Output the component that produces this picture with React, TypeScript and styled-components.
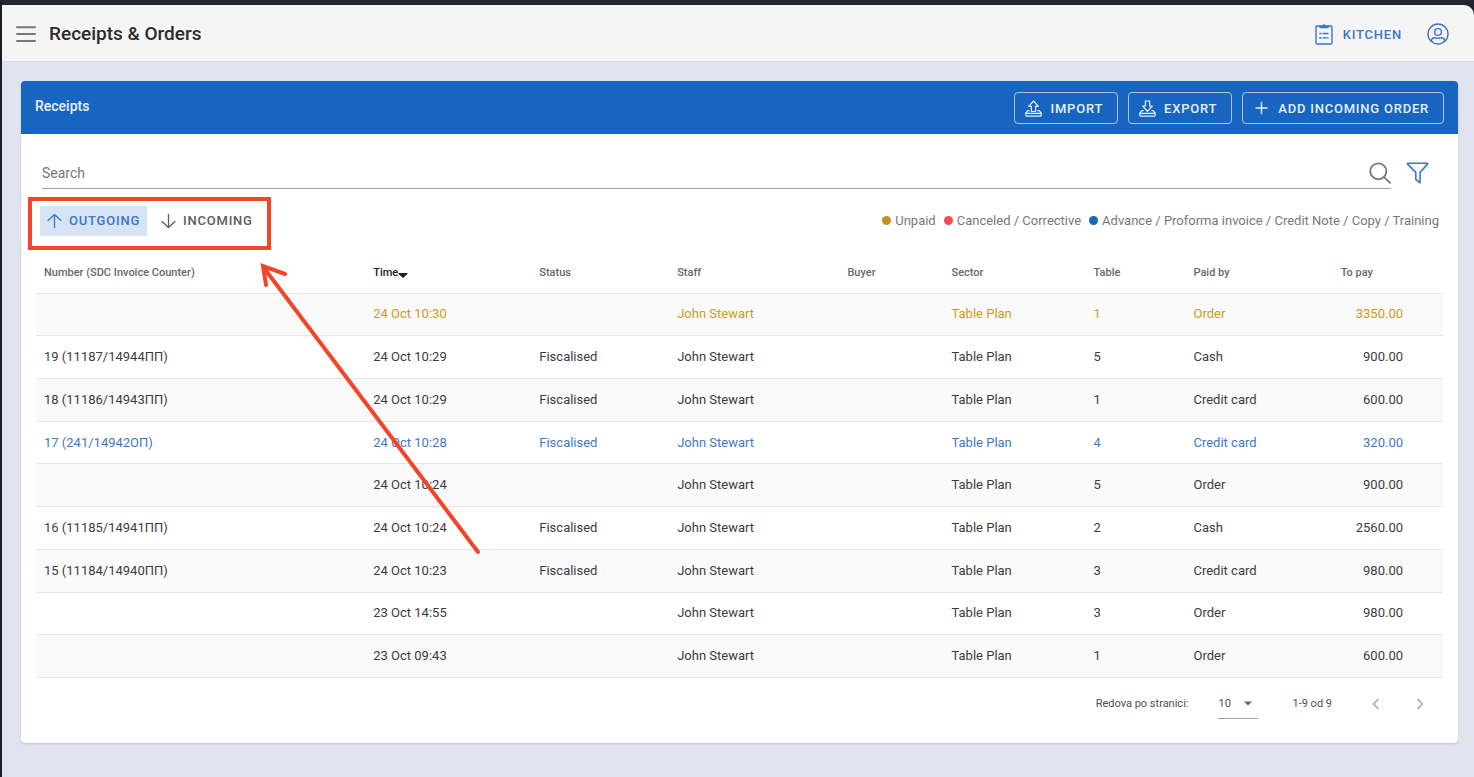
import React from "react";
import styled, { createGlobalStyle } from "styled-components";

const GlobalStyle = createGlobalStyle`
  * { box-sizing: border-box; }
  body {
    margin: 0;
    background: #e1e4ee;
    font-family: Roboto, "Liberation Sans", sans-serif;
    color: #333;
  }
  button, input, select { font-family: inherit; }
`;

const Window = styled.div`
  min-height: 100vh;
  display: flex;
  flex-direction: column;
  border-top: 5px solid #22262f;
  border-left: 2px solid #1b1c28;
  background: #22262f;
`;

const TopBar = styled.header`
  display: flex;
  align-items: center;
  height: 57px;
  padding: 2px 25px 0 14px;
  background: #f5f5f5;
  border-bottom: 1px solid #d8dae2;
  border-top-right-radius: 10px;
`;

const IconButton = styled.button`
  display: flex;
  padding: 0;
  border: 0;
  background: none;
  color: ${(p) => p.color || "#777"};
  cursor: pointer;
  &:disabled { cursor: default; }
`;

const PageTitle = styled.h1`
  margin: 0 auto 0 13px;
  font-size: 19px;
  font-weight: 500;
  line-height: 24px;
  color: #2b2b2b;
`;

const KitchenLink = styled.a`
  display: flex;
  align-items: center;
  gap: 10px;
  margin-right: 25px;
  font-size: 13px;
  font-weight: 500;
  letter-spacing: 0.06em;
  color: #3b76ca;
  text-decoration: none;
`;

const Content = styled.main`
  flex: 1;
  padding: 19px 16px 33px 19px;
  background: #e1e4ee;
`;

const Card = styled.section`
  background: #fff;
  border-radius: 4px;
  overflow: hidden;
  box-shadow: 0 1px 2px rgba(60, 70, 110, 0.2);
`;

const CardHead = styled.div`
  display: flex;
  align-items: flex-start;
  gap: 10px;
  height: 53px;
  padding: 11px 14px 0 14px;
  background: #1765c1;
  color: #fff;
`;

const CardTitle = styled.h2`
  margin: 0 auto 0 0;
  font-size: 14px;
  font-weight: 500;
  line-height: 28px;
  color: #eaf1fb;
`;

const OutlineButton = styled.button`
  display: flex;
  align-items: center;
  gap: 8px;
  height: 32px;
  padding: 0 14px 0 10px;
  border: 1px solid #a9c5ea;
  border-radius: 4px;
  background: none;
  color: #e6effa;
  font-size: 13px;
  font-weight: 500;
  letter-spacing: 0.06em;
  white-space: nowrap;
  cursor: pointer;
`;

const CardBody = styled.div`
  padding: 23px 15px 18px;
`;

const SearchRow = styled.div`
  display: flex;
  align-items: center;
  gap: 15px;
  padding: 0 14px 0 6px;
`;

const SearchField = styled.label`
  flex: 1;
  display: flex;
  align-items: center;
  height: 32px;
  border-bottom: 1px solid #a0a0a0;
  color: #777;
`;

const SearchInput = styled.input`
  flex: 1;
  min-width: 0;
  padding: 0;
  border: 0;
  outline: 0;
  background: none;
  font-size: 14px;
  color: #333;
  &::placeholder { color: #777; opacity: 1; }
`;

const Toolbar = styled.div`
  display: flex;
  align-items: center;
  justify-content: space-between;
  height: 62px;
  padding: 1px 4px 0;
`;

const Toggles = styled.div`
  position: relative;
  display: flex;
  gap: 7px;
`;

const Toggle = styled.button<{ $active?: boolean }>`
  display: flex;
  align-items: center;
  gap: 7px;
  height: 30px;
  padding: 0 7px;
  border: 0;
  background: ${(p) => (p.$active ? "#d6e3f4" : "transparent")};
  color: ${(p) => (p.$active ? "#3b76ca" : "#5c5c5c")};
  font-size: 13px;
  font-weight: 500;
  letter-spacing: 0.06em;
  cursor: pointer;
`;

const Callout = styled.svg`
  position: absolute;
  left: -12px;
  top: -10px;
  z-index: 1;
  pointer-events: none;
`;

const Legend = styled.ul`
  display: flex;
  gap: 8px;
  margin: 0;
  padding: 0;
  list-style: none;
  font-size: 13px;
  color: #777;
`;

const LegendItem = styled.li<{ $dot: string }>`
  display: flex;
  align-items: center;
  gap: 4px;
  &::before {
    content: "";
    width: 9px;
    height: 9px;
    border-radius: 50%;
    background: ${(p) => p.$dot};
  }
`;

const Table = styled.table`
  width: 100%;
  height: 427px;
  table-layout: fixed;
  border-collapse: collapse;
`;

const Col = styled.col<{ $share: number }>`
  width: ${(p) => p.$share}%;
`;

const HeadCell = styled.th<{ $sorted?: boolean; $numeric?: boolean }>`
  height: 42px;
  padding: ${(p) => (p.$numeric ? "2px 70px 0 8px" : "2px 8px 0")};
  border-bottom: 1px solid #e6e6e6;
  font-size: 11px;
  font-weight: 500;
  text-align: ${(p) => (p.$numeric ? "right" : "left")};
  white-space: nowrap;
  color: ${(p) => (p.$sorted ? "#222" : "#686868")};
`;

const SortMark = styled.svg`
  margin-bottom: -4px;
`;

const tones = { plain: "#3c3c3c", unpaid: "#cb9a24", advance: "#3f77cb" };
type Tone = keyof typeof tones;

const Row = styled.tr<{ $tone: Tone }>`
  color: ${(p) => tones[p.$tone]};
  &:nth-child(odd) { background: #fafafa; }
`;

const Cell = styled.td<{ $numeric?: boolean }>`
  padding: ${(p) => (p.$numeric ? "0 40px 0 8px" : "0 8px")};
  border-bottom: 1px solid #e6e6e6;
  font-size: 13px;
  line-height: 16px;
  text-align: ${(p) => (p.$numeric ? "right" : "left")};
  white-space: nowrap;
`;

const Pager = styled.div`
  display: flex;
  align-items: center;
  justify-content: flex-end;
  height: 43px;
  margin-top: 4px;
  padding-right: 15px;
  font-size: 11px;
  color: #4f4f4f;
`;

const PageSize = styled.div`
  position: relative;
  display: flex;
  align-items: center;
  width: 40px;
  height: 30px;
  margin: 0 34px 0 30px;
  border-bottom: 1px solid #a0a0a0;
  svg {
    position: absolute;
    right: 6px;
    pointer-events: none;
  }
`;

const PageSelect = styled.select`
  width: 100%;
  padding: 0;
  border: 0;
  outline: 0;
  appearance: none;
  background: none;
  font-size: 11px;
  color: #4f4f4f;
`;

const Steps = styled.div`
  display: flex;
  gap: 28px;
  margin-left: 36px;
`;

const stroke = {
  fill: "none",
  stroke: "currentColor",
  strokeLinecap: "round" as const,
  strokeLinejoin: "round" as const,
};

const MenuIcon = () => (
  <svg width="20" height="18" viewBox="0 0 20 18" {...stroke} strokeWidth="2">
    <path d="M1 2.3h18M1 9h18M1 15.9h18" />
  </svg>
);

const ClipboardIcon = () => (
  <svg width="18" height="22" viewBox="0 0 18 22" {...stroke} strokeWidth="1.4">
    <path d="M5 3H2.2Q1 3 1 4.2v15.6Q1 21 2.2 21h13.6q1.200 0 1.200-1.200V4.200Q17 3 15.800 3H13" />
    <path d="M5 4.600V3h2.500a1.600 1.600 0 0 1 3 0H13v1.600z" fill="currentColor" />
    <path d="M8 10.500h5M8 14.900h5" />
    <path d="M5 10.500h.6M5 14.900h.6" strokeWidth="1.700" />
  </svg>
);

const UserIcon = () => (
  <svg width="22" height="22" viewBox="0 0 22 22" {...stroke} strokeWidth="1.4">
    <circle cx="11" cy="11" r="10" />
    <circle cx="11" cy="9" r="3.400" />
    <path d="M4.500 18.200v-.7q.2-2.800 3.200-2.800 1.300 0 3.300.7 2-.7 3.300-.7 3 0 3.200 2.800v.7" />
  </svg>
);

const TrayIcon = ({ down }: { down?: boolean }) => (
  <svg width="17" height="17" viewBox="0 0 17 17" {...stroke} strokeWidth="1.200">
    {down ? (
      <path d="M6.400 1h4.200v5h2.700L8.500 11.300 3.700 6h2.700z" />
    ) : (
      <path d="M6.400 11.500h4.200V6.300h2.700L8.500 1 3.700 6.300h2.700z" />
    )}
    <path d="M4.200 10.700H2.800L.8 13v2.200q0 1 1 1h13.400q1 0 1-1V13l-2-2.300h-1.400M.8 13.300h15.400" />
  </svg>
);

const PlusIcon = () => (
  <svg width="17" height="16" viewBox="0 0 17 16" {...stroke} strokeWidth="1.500">
    <path d="M8.500 2.500v11M3 8h11" />
  </svg>
);

const SearchIcon = () => (
  <svg width="22" height="22" viewBox="0 0 22 22" {...stroke} strokeWidth="1.800">
    <circle cx="9.300" cy="9.300" r="8" />
    <path d="M15.200 15.200l5.800 5.600" />
  </svg>
);

const FilterIcon = () => (
  <svg width="23" height="22" viewBox="0 0 23 22" {...stroke} strokeWidth="1.600">
    <path d="M1.500 1.200h20v.9l-7.400 8.300v10.400l-4.300-3.300v-7.100L1.500 2.100z" />
  </svg>
);

const ArrowIcon = ({ down }: { down?: boolean }) => (
  <svg width="15" height="16" viewBox="0 0 15 16" {...stroke} strokeWidth="1.300">
    {down ? <path d="M7.500 1.500v13M1 8.500l6.500 6 6.500-6" /> : <path d="M7.500 14.500v-13M1 7.500l6.500-6 6.500 6" />}
  </svg>
);

const Chevron = ({ next }: { next?: boolean }) => (
  <svg width="16" height="16" viewBox="0 0 16 16" fill="none" stroke="currentColor" strokeWidth="1.600">
    {next ? <path d="M5.500 3.200l5 4.800-5 4.800" /> : <path d="M10.500 3.200l-5 4.800 5 4.800" />}
  </svg>
);

const columns = [
  { label: "Number (SDC Invoice Counter)", share: 23.4 },
  { label: "Time", share: 11.8, sorted: true },
  { label: "Status", share: 9.8 },
  { label: "Staff", share: 12.1 },
  { label: "Buyer", share: 7.4 },
  { label: "Sector", share: 10.1 },
  { label: "Table", share: 7.1 },
  { label: "Paid by", share: 9 },
  { label: "To pay", share: 9.3, numeric: true },
];

type Receipt = [number: string, time: string, status: string, table: string, paidBy: string, total: string, tone?: Tone];

const receipts: Receipt[] = [
  ["", "24 Oct 10:30", "", "1", "Order", "3350.00", "unpaid"],
  ["19 (11187/14944ПП)", "24 Oct 10:29", "Fiscalised", "5", "Cash", "900.00"],
  ["18 (11186/14943ПП)", "24 Oct 10:29", "Fiscalised", "1", "Credit card", "600.00"],
  ["17 (241/14942ОП)", "24 Oct 10:28", "Fiscalised", "4", "Credit card", "320.00", "advance"],
  ["", "24 Oct 10:24", "", "5", "Order", "900.00"],
  ["16 (11185/14941ПП)", "24 Oct 10:24", "Fiscalised", "2", "Cash", "2560.00"],
  ["15 (11184/14940ПП)", "24 Oct 10:23", "Fiscalised", "3", "Credit card", "980.00"],
  ["", "23 Oct 14:55", "", "3", "Order", "980.00"],
  ["", "23 Oct 09:43", "", "1", "Order", "600.00"],
];

export default function App() {
  return (
    <>
      <GlobalStyle />
      <Window>
        <TopBar>
          <IconButton aria-label="Menu"><MenuIcon /></IconButton>
          <PageTitle>Receipts &amp; Orders</PageTitle>
          <KitchenLink href="#kitchen"><ClipboardIcon />KITCHEN</KitchenLink>
          <IconButton aria-label="Account" color="#3b76ca"><UserIcon /></IconButton>
        </TopBar>
        <Content>
          <Card>
            <CardHead>
              <CardTitle>Receipts</CardTitle>
              <OutlineButton><TrayIcon />IMPORT</OutlineButton>
              <OutlineButton><TrayIcon down />EXPORT</OutlineButton>
              <OutlineButton><PlusIcon />ADD INCOMING ORDER</OutlineButton>
            </CardHead>
            <CardBody>
              <SearchRow>
                <SearchField>
                  <SearchInput type="text" placeholder="Search" aria-label="Search" />
                  <SearchIcon />
                </SearchField>
                <IconButton aria-label="Filter" color="#3b76ca"><FilterIcon /></IconButton>
              </SearchRow>
              <Toolbar>
                <Toggles>
                  <Toggle $active aria-pressed="true"><ArrowIcon />OUTGOING</Toggle>
                  <Toggle aria-pressed="false"><ArrowIcon down />INCOMING</Toggle>
                  <Callout width="460" height="364" viewBox="0 0 460 364" fill="none" stroke="#f4452b" strokeWidth="4">
                    <rect x="2" y="3" width="239" height="49" />
                    <path d="M450 356L236 72M257 78l-22-8 3 19" strokeLinecap="round" />
                  </Callout>
                </Toggles>
                <Legend>
                  <LegendItem $dot="#c09127">Unpaid</LegendItem>
                  <LegendItem $dot="#f44e55">Canceled / Corrective</LegendItem>
                  <LegendItem $dot="#1765c1">Advance / Proforma invoice / Credit Note / Copy / Training</LegendItem>
                </Legend>
              </Toolbar>
              <Table>
                <colgroup>
                  {columns.map((c) => <Col key={c.label} $share={c.share} />)}
                </colgroup>
                <thead>
                  <tr>
                    {columns.map((c) => (
                      <HeadCell key={c.label} scope="col" $sorted={c.sorted} $numeric={c.numeric}>
                        {c.label}
                        {c.sorted && (
                          <SortMark width="10" height="10" viewBox="0 0 10 10" fill="currentColor">
                            <path d="M.5 3h9v1L5 8 .5 4z" />
                          </SortMark>
                        )}
                      </HeadCell>
                    ))}
                  </tr>
                </thead>
                <tbody>
                  {receipts.map(([number, time, status, table, paidBy, total, tone = "plain"]) => (
                    <Row key={time + total + table} $tone={tone}>
                      <Cell>{number}</Cell>
                      <Cell>{time}</Cell>
                      <Cell>{status}</Cell>
                      <Cell>John Stewart</Cell>
                      <Cell />
                      <Cell>Table Plan</Cell>
                      <Cell>{table}</Cell>
                      <Cell>{paidBy}</Cell>
                      <Cell $numeric>{total}</Cell>
                    </Row>
                  ))}
                </tbody>
              </Table>
              <Pager>
                <label htmlFor="page-size">Redova po stranici:</label>
                <PageSize>
                  <PageSelect id="page-size" defaultValue="10">
                    <option>10</option>
                    <option>25</option>
                    <option>50</option>
                  </PageSelect>
                  <svg width="8" height="5" viewBox="0 0 8 5" fill="#666"><path d="M0 .5h8L4 4.500z" /></svg>
                </PageSize>
                <span>1-9 od 9</span>
                <Steps>
                  <IconButton aria-label="Previous page" color="#aaa" disabled><Chevron /></IconButton>
                  <IconButton aria-label="Next page" color="#aaa" disabled><Chevron next /></IconButton>
                </Steps>
              </Pager>
            </CardBody>
          </Card>
        </Content>
      </Window>
    </>
  );
}
